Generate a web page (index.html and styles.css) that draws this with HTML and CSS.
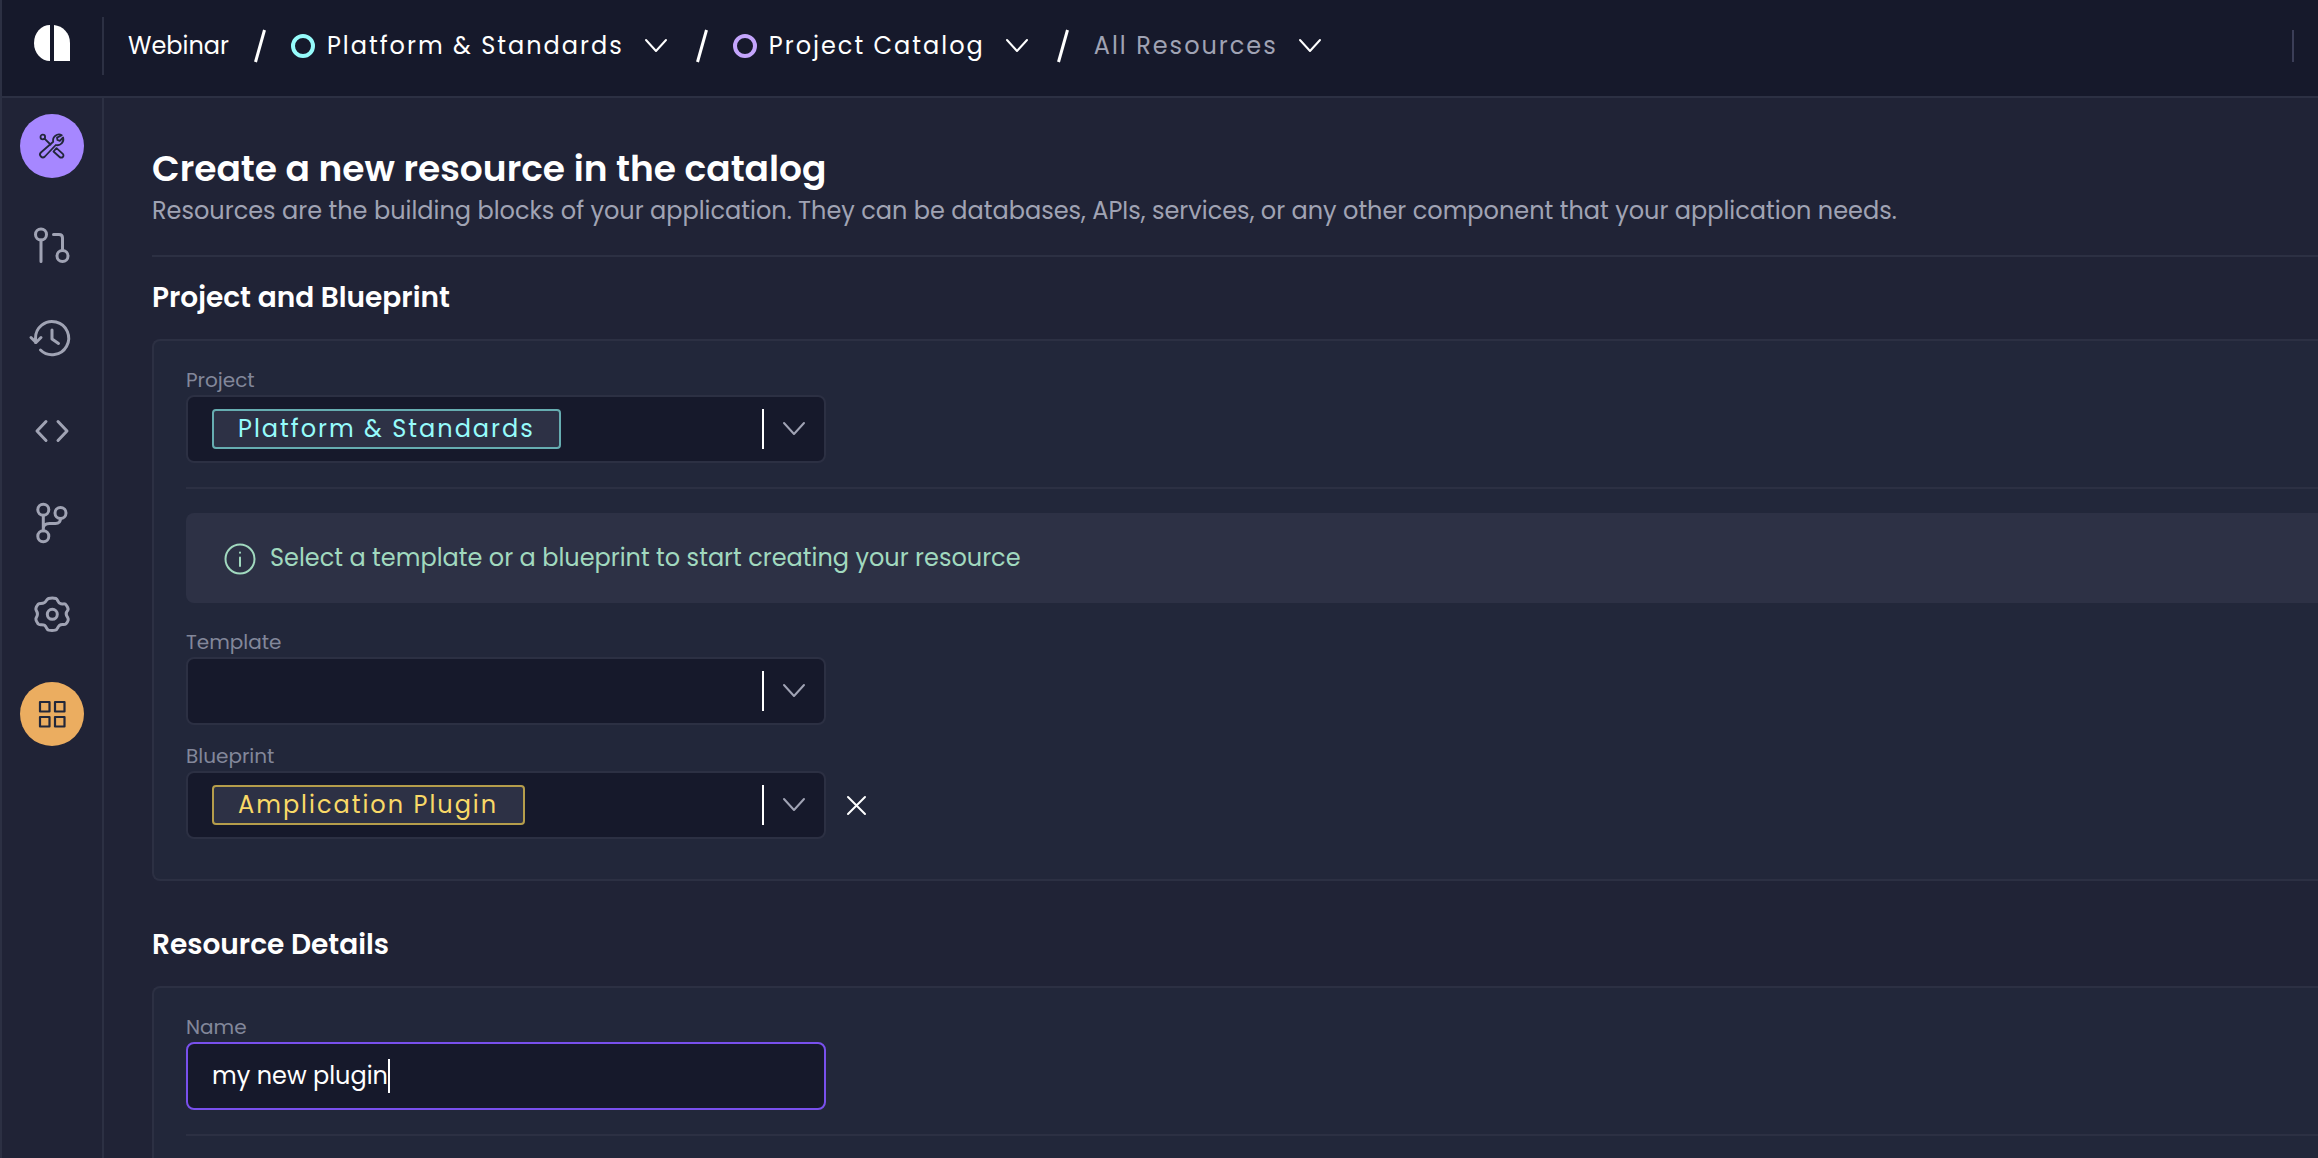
FILE: index.html
```html
<!DOCTYPE html>
<html lang="en">
<head>
<meta charset="utf-8">
<title>Create a new resource</title>
<link rel="stylesheet" href="styles.css">
</head>
<body>
<div class="app">
  <header class="header">
    <a class="logo" href="#" aria-label="Home">
      <svg width="36" height="36" viewBox="0 0 36 36" fill="#fff"><path d="M16 0v36A16 18 0 0 1 16 0z"/><path d="M20 0c9 1 16 8 16 18v18H20z"/></svg>
    </a>
    <nav class="crumbs">
      <a class="crumb-root" href="#">Webinar</a>
      <svg class="slash" width="14" height="32" viewBox="0 0 14 32"><path d="M11.500 0 2.500 32"/></svg>
      <button class="crumb" type="button"><span class="ring ring-cyan"></span><span class="crumb-text">Platform &amp; Standards</span><svg class="chevron" width="24" height="16" viewBox="0 0 24 16"><path d="M2 2 12 13 22 2"/></svg></button>
      <svg class="slash" width="14" height="32" viewBox="0 0 14 32"><path d="M11.500 0 2.500 32"/></svg>
      <button class="crumb" type="button"><span class="ring ring-purple"></span><span class="crumb-text">Project Catalog</span><svg class="chevron" width="24" height="16" viewBox="0 0 24 16"><path d="M2 2 12 13 22 2"/></svg></button>
      <svg class="slash" width="14" height="32" viewBox="0 0 14 32"><path d="M11.500 0 2.500 32"/></svg>
      <button class="crumb" type="button"><span class="crumb-text crumb-muted">All Resources</span><svg class="chevron" width="24" height="16" viewBox="0 0 24 16"><path d="M2 2 12 13 22 2"/></svg></button>
    </nav>
    <div class="header-divider"></div>
  </header>

  <div class="body">
    <nav class="sidebar">
      <a class="round round-purple" href="#" aria-label="Platform">
        <svg width="26" height="26" viewBox="0 0 26 26" fill="none" stroke="#22273a" stroke-width="1.800" stroke-linejoin="round" stroke-linecap="round"><circle cx="3.800" cy="4" r="2.300"/><path d="M5.500 5.700 11.500 11.500"/><path d="M22.800 2.200a6 6 0 0 0-8.600 6.600L1.900 19.500a2.700 2.700 0 0 0 4 4L16.800 12a6 6 0 0 0 7.300-7.500L20.800 7.800 18.500 7 18 4.600z"/><path d="M14.500 18.500l3-3.300 6.300 5.600a2.200 2.200 0 0 1-3.200 3.200z"/></svg>
      </a>
      <div class="nav-list">
        <a class="nav-item" href="#" aria-label="Pending changes"><svg width="40" height="40" viewBox="0 0 40 40"><circle cx="9" cy="8.500" r="5.500"/><path d="M9 14V35.500M21.500 8.500H27q3.500 0 3.500 3.500V24.500"/><circle cx="30.500" cy="30" r="5.500"/></svg></a>
        <a class="nav-item" href="#" aria-label="History"><svg width="40" height="40" viewBox="0 0 40 40"><path d="M3.500 24.500V20.500A16.600 16.600 0 1 1 8.500 32M-1 19.500 4 24.500 9 19.500M20 12V21l6.500 4.500"/></svg></a>
        <a class="nav-item" href="#" aria-label="Code"><svg width="40" height="40" viewBox="0 0 40 40"><path d="M14 11.500 5 21 14 30.500M26 11.500l9 9.500L26 30.500"/></svg></a>
        <a class="nav-item" href="#" aria-label="Branches"><svg width="40" height="40" viewBox="0 0 40 40"><circle cx="11.300" cy="7.700" r="5.500"/><circle cx="28.500" cy="11" r="5.500"/><circle cx="11.300" cy="34.200" r="5.500"/><path d="M11.300 13.200V28.700M28.500 16.500c0 4-2 5-5 5h-6c-4 0-6.200 2-6.200 5"/></svg></a>
        <a class="nav-item" href="#" aria-label="Settings"><svg width="40" height="40" viewBox="0 0 40 40"><circle cx="20.300" cy="20.300" r="5"/><path d="M16.500 4.500q3.800-1.200 7.600 0c1.800.8 1.500 4.700 4.700 5.300 3.300.6 4-1 5.600 1.500q2.500 3.300 1.400 5c-1.800 2-2.400 4.500 0 7.500 1.200 1.800-.5 4.500-2 6.200-1.500 1.500-4-.5-6.500 1.500-2.200 2-1.300 4-4 4.600q-3.200.8-6.600 0c-2.500-.8-1.800-3-4-4.800-2.500-1.500-5 .2-6.500-1.300-1.500-2-3-4.500-2-6.200 2-3 1.700-5 0-7.500-1-2 .5-4.300 2-6.200 1.500-1.200 3.800 0 6-1.300 2.200-1.300 2.300-3.600 4.300-4.300z"/></svg></a>
      </div>
      <a class="round round-orange" href="#" aria-label="Catalog">
        <svg width="28" height="28" viewBox="0 0 28 28" fill="none" stroke="#22273a" stroke-width="2.200" stroke-linejoin="round"><path d="M2 2h9.500v9.500H2zM17 2h9.500v9.500H17zM2 17h9.500v9.500H2zM17 17h9.500v9.500H17z"/></svg>
      </a>
    </nav>

    <main class="main">
      <div class="intro">
        <h1>Create a new resource in the catalog</h1>
        <p>Resources are the building blocks of your application. They can be databases, APIs, services, or any other component that your application needs.</p>
      </div>

      <section class="section">
        <h2>Project and Blueprint</h2>
        <div class="card">
          <div class="field">
            <label for="project">Project</label>
            <div class="box">
              <select id="project" class="chip chip-cyan"><option>Platform &amp; Standards</option></select>
              <span class="box-end"><svg class="chevron" width="24" height="16" viewBox="0 0 24 16"><path d="M2 2 12 13 22 2"/></svg></span>
            </div>
          </div>
          <hr>
          <div class="notice">
            <svg width="32" height="32" viewBox="0 0 32 32" fill="none" stroke="#a1d9bf" stroke-width="2" stroke-linecap="round"><circle cx="16" cy="17" r="14.500"/><path d="M16 15.500V24M16 10.500v.2"/></svg>
            <span>Select a template or a blueprint to start creating your resource</span>
          </div>
          <div class="field">
            <label for="template">Template</label>
            <div class="box">
              <select id="template" class="blank"><option></option></select>
              <span class="box-end"><svg class="chevron" width="24" height="16" viewBox="0 0 24 16"><path d="M2 2 12 13 22 2"/></svg></span>
            </div>
          </div>
          <div class="field">
            <label for="blueprint">Blueprint</label>
            <div class="field-row">
              <div class="box">
                <select id="blueprint" class="chip chip-yellow"><option>Amplication Plugin</option></select>
                <span class="box-end"><svg class="chevron" width="24" height="16" viewBox="0 0 24 16"><path d="M2 2 12 13 22 2"/></svg></span>
              </div>
              <button class="clear" type="button" aria-label="Clear blueprint"><svg width="20" height="20" viewBox="0 0 20 20"><path d="M2 2 19 19M19 2 2 19"/></svg></button>
            </div>
          </div>
        </div>
      </section>

      <section class="section">
        <h2>Resource Details</h2>
        <div class="card">
          <div class="field">
            <label for="name">Name</label>
            <div class="box box-focus">
              <input id="name" type="text" value="my new plugin"><span class="caret"></span>
            </div>
          </div>
          <hr>
        </div>
      </section>
    </main>
  </div>
</div>
</body>
</html>
```

FILE: styles.css
```css
:root {
  --ink: #16192b;
  --page: #202336;
  --card: #22273a;
  --line: #2c3043;
  --raised: #2d3145;
  --muted: #a0a3b4;
  --label: #83879a;
}
* { box-sizing: border-box; }
body {
  margin: 0;
  background: var(--page);
  color: #fff;
  font: 24px/36px Poppins, Inter, sans-serif;
}
button, select, input { font: inherit; color: inherit; }
a { color: inherit; text-decoration: none; }
svg { display: block; flex: none; overflow: visible; }

.app {
  display: flex;
  flex-direction: column;
  height: 100vh;
  overflow: hidden;
  border-left: 2px solid var(--line);
}
.header {
  display: flex;
  flex: none;
  height: 98px;
  padding-bottom: 4px;
  align-items: center;
  background: var(--ink);
  border-bottom: 2px solid var(--line);
}
.logo {
  display: grid;
  width: 102px;
  height: 58px;
  padding-bottom: 6px;
  place-items: center;
  border-right: 2px solid var(--line);
}
.crumbs {
  display: flex;
  flex: 1;
  align-items: center;
  gap: 24px;
  padding-left: 24px;
}
.crumb {
  display: flex;
  align-items: center;
  gap: 12px;
  padding: 0 3px 0 0;
  background: none;
  border: 0;
  white-space: nowrap;
}
.crumb-text { letter-spacing: 2px; margin-right: 8px; }
.crumb-muted { color: var(--muted); }
.ring { width: 24px; height: 24px; border: 4px solid; border-radius: 50%; }
.ring-cyan { color: #96fbfb; }
.ring-purple { color: #c4a5fc; }
.slash { fill: none; stroke: #fff; stroke-width: 3; }
.chevron { fill: none; stroke: #fff; stroke-width: 2; stroke-linecap: round; stroke-linejoin: round; }
.header-divider { width: 2px; height: 32px; margin-right: 24px; background: #3b3e57; }

.body { display: flex; flex: 1; min-height: 0; }
.sidebar {
  display: flex;
  flex: none;
  flex-direction: column;
  align-items: center;
  gap: 22px;
  width: 102px;
  padding-top: 16px;
  border-right: 2px solid var(--line);
}
.round { display: grid; width: 64px; height: 64px; place-items: center; border-radius: 50%; }
.round-purple { background: #a687ff; }
.round-orange { background: #ebad60; }
.nav-item { display: grid; height: 92px; place-items: center; }
.nav-item svg { fill: none; stroke: var(--muted); stroke-width: 3; stroke-linecap: round; stroke-linejoin: round; }

.main { flex: 1; min-width: 0; padding: 47px 0 0 48px; overflow: hidden; }
.intro { padding-bottom: 26px; border-bottom: 2px solid var(--line); }
h1 { margin: 0; font-size: 36px; line-height: 48px; font-weight: 600; }
p { margin: 0; color: var(--muted); white-space: nowrap; }
.section { padding-top: 20px; }
.section + .section { padding-top: 43px; }
h2 { margin: 0 0 20px; font-size: 28px; line-height: 42px; font-weight: 600; }
.card {
  padding: 24px 0 40px 32px;
  background: var(--card);
  border: 2px solid var(--line);
  border-right: 0;
  border-radius: 8px 0 0 8px;
}
.field { display: flex; flex-direction: column; }
.field + .field { margin-top: 16px; }
label { color: var(--label); font-size: 20px; line-height: 30px; }
.field-row { display: flex; align-items: center; gap: 20px; }
.box {
  display: flex;
  align-items: center;
  width: 640px;
  height: 68px;
  padding: 0 18px 0 24px;
  background: var(--ink);
  border: 2px solid var(--line);
  border-radius: 8px;
}
.box-focus { border-color: #7950ed; }
.box-end { display: flex; align-items: center; height: 40px; margin-left: auto; padding-left: 18px; border-left: 2px solid #fff; }
.box-end .chevron { stroke: var(--muted); }
.chip {
  appearance: none;
  height: 40px;
  padding: 0 24px;
  background: var(--raised);
  border: 2px solid;
  border-radius: 4px;
  letter-spacing: 2px;
}
.chip-cyan { color: #96fbfb; border-color: #66adb1; }
.chip-yellow { color: #f9d967; border-color: #b59d4b; }
.blank { appearance: none; flex: 1; height: 40px; background: none; border: 0; }
.clear { padding: 0; background: none; border: 0; }
.clear svg { fill: none; stroke: #fff; stroke-width: 2; stroke-linecap: round; }
input { field-sizing: content; padding: 0; background: none; border: 0; outline: 0; }
.caret { width: 2px; height: 34px; background: #fff; }
hr { height: 2px; margin: 24px 0; background: var(--line); border: 0; }
.notice {
  display: flex;
  align-items: center;
  gap: 14px;
  height: 90px;
  margin-bottom: 24px;
  padding-left: 38px;
  background: var(--raised);
  border-radius: 8px 0 0 8px;
  color: #a1d9bf;
}
```
